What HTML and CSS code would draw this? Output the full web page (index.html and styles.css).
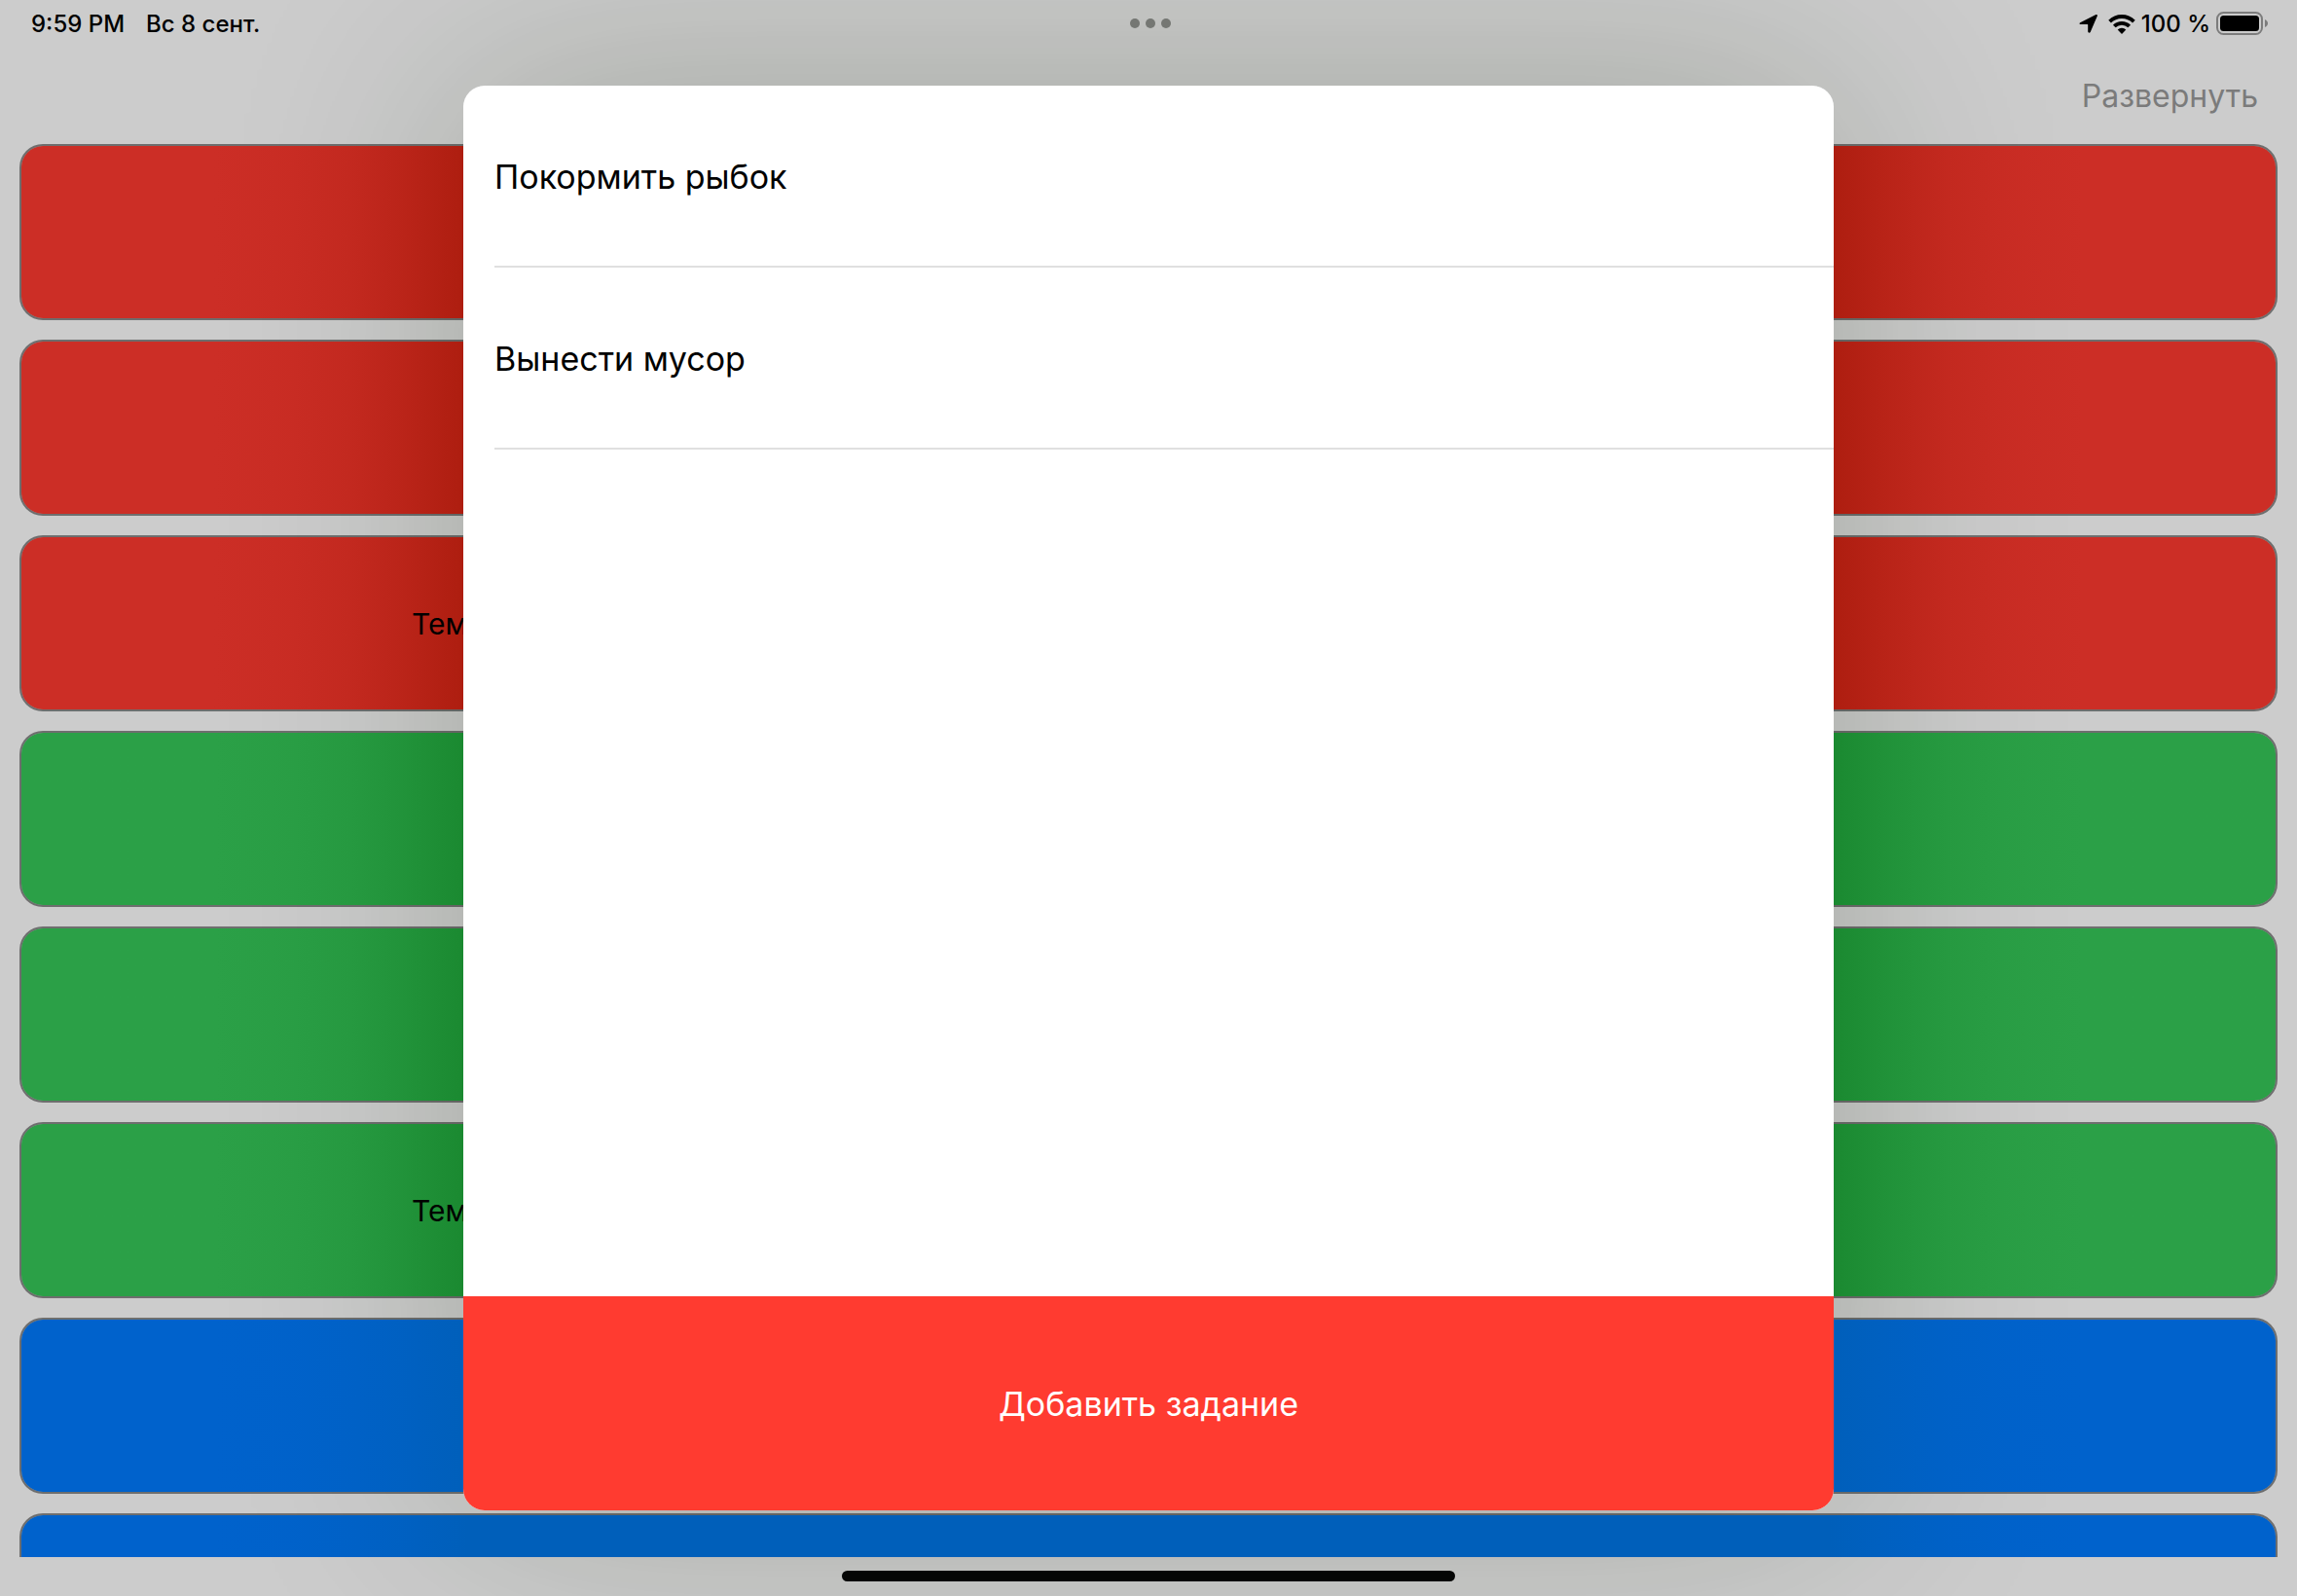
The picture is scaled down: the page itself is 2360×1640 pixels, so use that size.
FILE: index.html
```html
<!DOCTYPE html>
<html lang="ru">
<head>
<meta charset="utf-8">
<meta name="viewport" content="width=device-width, initial-scale=1">
<title>Задания</title>
<link rel="stylesheet" href="styles.css">
</head>
<body>
<div class="screen">
  <header class="status">
    <div class="status-side">
      <span>9:59 PM</span>
      <span>Вс 8 сент.</span>
    </div>
    <div class="dots"><i class="dot"></i><i class="dot"></i><i class="dot"></i></div>
    <div class="status-side status-right">
      <svg class="icon-location" viewBox="0 0 20 20" aria-hidden="true"><path d="M1.200 9.200 17.400 1.100c1.100-.5 1.900.3 1.400 1.400L11.700 18.900c-.6 1.200-2.500 1-2.500-.6V11.600c0-.4-.2-.6-.6-.6H1.900C.2 11 .1 9.800 1.200 9.200z"/></svg>
      <svg class="icon-wifi" viewBox="0 0 28 21" aria-hidden="true"><g fill="none" stroke="#000" stroke-width="3.800"><path d="M1.600 8.100a17.600 17.600 0 0 1 24.800 0"/><path d="M6.300 13a11 11 0 0 1 15.400 0"/></g><path d="M14 21 9.700 16.600a6 6 0 0 1 8.600 0z"/></svg>
      <span>100 %</span>
      <svg class="icon-battery" viewBox="0 0 54 24" aria-hidden="true"><rect x="1" y="1" width="46" height="22" rx="6.500" fill="none" stroke="#7c7c7c" stroke-width="2"/><rect x="4" y="4" width="40" height="16" rx="3.500"/><path d="M50 8c4 1.500 4 6.500 0 8z" fill="#7c7c7c"/></svg>
    </div>
  </header>
  <div class="toolbar"><button class="expand" type="button">Развернуть</button></div>
  <main class="cards">
    <button class="card red" type="button" aria-label="Список"></button>
    <button class="card red" type="button" aria-label="Список"></button>
    <button class="card red" type="button">Тем</button>
    <button class="card green" type="button" aria-label="Список"></button>
    <button class="card green" type="button" aria-label="Список"></button>
    <button class="card green" type="button">Тем</button>
    <button class="card blue" type="button" aria-label="Список"></button>
    <button class="card blue" type="button" aria-label="Список"></button>
  </main>
  <footer class="home"><div class="home-bar"></div></footer>
  <div class="shade"></div>
  <section class="sheet" role="dialog" aria-label="Задания">
    <ul class="tasks">
      <li class="task">Покормить рыбок</li>
      <li class="task">Вынести мусор</li>
    </ul>
    <button class="add" type="button">Добавить задание</button>
  </section>
</div>
</body>
</html>
```
FILE: styles.css
```css
* { box-sizing: border-box; }

body {
  margin: 0;
  background: #ccc;
  color: #000;
  font-family: Inter, "Noto Sans", sans-serif;
}

button {
  font: inherit;
  color: inherit;
  border: 0;
  padding: 0;
  background: none;
}

.screen {
  position: relative;
  isolation: isolate;
  display: flex;
  flex-direction: column;
  height: 100vh;
  overflow: hidden;
}

.status {
  display: grid;
  grid-template-columns: 1fr auto 1fr;
  align-items: center;
  height: 48px;
  padding: 0 29px 0 32px;
  font-size: 24px;
  font-weight: 500;
}

.status-side { display: flex; align-items: center; gap: 22px; }
.status-right { justify-content: flex-end; gap: 6px; }
.dots { display: flex; gap: 6px; }
.dot { width: 10px; height: 10px; border-radius: 50%; background: #757773; }
.icon-location { width: 20px; height: 20px; margin-right: 4px; }
.icon-wifi { width: 28px; height: 21px; }
.icon-battery { width: 54px; height: 24px; }

.toolbar {
  display: flex;
  justify-content: flex-end;
  align-items: center;
  height: 100px;
  padding: 0 40px;
}

.expand { font-size: 32px; color: #7b7b7b; }

.cards {
  flex: 1;
  min-height: 0;
  overflow: hidden;
  display: flex;
  flex-direction: column;
  gap: 20px;
  padding: 0 20px;
}

.card {
  flex: none;
  height: 181px;
  padding-left: calc(50% - 759px);
  border: 2px solid rgba(0, 0, 0, .46);
  border-radius: 24px;
  font-size: 30px;
  text-align: left;
  background: linear-gradient(90deg,
    var(--light) calc(50% - 960px),
    color-mix(in srgb, var(--light) 88%, var(--dark)) calc(50% - 880px),
    color-mix(in srgb, var(--light) 70%, var(--dark)) calc(50% - 820px),
    color-mix(in srgb, var(--light) 42%, var(--dark)) calc(50% - 765px),
    var(--dark) calc(50% - 700px),
    var(--dark) calc(50% + 700px),
    color-mix(in srgb, var(--light) 42%, var(--dark)) calc(50% + 765px),
    color-mix(in srgb, var(--light) 70%, var(--dark)) calc(50% + 820px),
    color-mix(in srgb, var(--light) 88%, var(--dark)) calc(50% + 880px),
    var(--light) calc(50% + 960px)) padding-box;
}

.red { --light: #cc2e26; --dark: #ad1d0f; }
.green { --light: #2ba047; --dark: #1a8930; }
.blue { --light: #0062cc; --dark: #005fba; }

.home {
  display: flex;
  justify-content: center;
  height: 40px;
  padding-top: 14px;
}

.home-bar { width: 630px; height: 11px; border-radius: 6px; background: #050605; }

/* Sheet shown over the dimmed list */
.shade, .sheet {
  position: absolute;
  top: 88px;
  bottom: 88px;
  left: 50%;
  width: min(1408px, 100% - 80px);
  transform: translateX(-50%);
  border-radius: 22px;
}

.shade {
  z-index: -1;
  box-shadow: 0 0 240px rgba(16, 36, 6, .22);
}

.sheet {
  display: flex;
  flex-direction: column;
  overflow: hidden;
  background: #fff;
}

.tasks {
  flex: 1;
  margin: 0;
  padding: 0 0 0 32px;
  list-style: none;
  font-size: 34px;
}

.task {
  display: flex;
  align-items: center;
  height: 187px;
  padding-top: 2px;
  border-bottom: 2px solid #e0e0e0;
}

.add {
  height: 220px;
  background: #ff3b30;
  color: #fff;
  font-size: 34px;
}
```
